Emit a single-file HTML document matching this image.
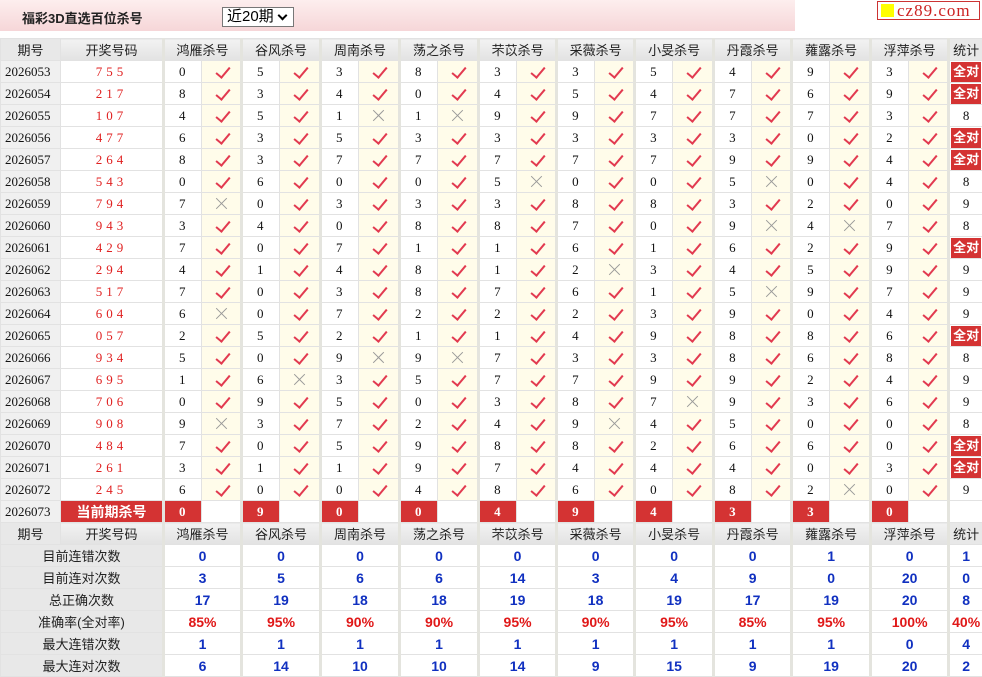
<!DOCTYPE html><html><head><meta charset="utf-8"><style>
body{margin:0;width:982px;height:677px;overflow:hidden;background:#fff;font-family:"Liberation Serif","Noto Serif CJK SC",serif;}
.top{position:absolute;left:0;top:0;width:795px;height:31px;background:linear-gradient(#fdeeee,#f6d6d8);}
.tt{position:absolute;left:22px;top:8px;font:bold 13px "Liberation Sans","Noto Sans CJK SC",sans-serif;color:#222}
.sel{position:absolute;left:222px;top:7px;border:1px solid #777;background:#fff;font:15px "Liberation Sans","Noto Sans CJK SC",sans-serif;line-height:18px;padding-left:4px;box-sizing:border-box;width:72px;height:20px}
.sel:after{content:"";position:absolute;right:7px;top:4px;width:5px;height:5px;border-right:2px solid #000;border-bottom:2px solid #000;transform:rotate(45deg)}
.logo{position:absolute;left:877px;top:1px;width:103px;height:19px;border:1px solid #c33;background:#fff;box-sizing:border-box;color:#c22;font:17px "Liberation Serif",serif;line-height:17px;letter-spacing:1px}
.logo i{display:inline-block;width:13px;height:13px;background:#ff0;margin:2px 3px 0 3px;vertical-align:top}
table{position:absolute;left:0;top:38px;border-collapse:collapse;table-layout:fixed;width:982px}
td{height:21px;padding:0;border:1px solid #e2e2e2;font-size:13px;text-align:center;color:#111;white-space:nowrap;overflow:hidden}
tr.h td{background:linear-gradient(#f2f2f2,#e2e2e2);font:13px "Liberation Sans","Noto Sans CJK SC",sans-serif;color:#222}
td.p{background:#f0f0f0;text-align:left;padding-left:4px}
td.n{color:#e02020;letter-spacing:4px}
td.g{border-left:3px solid #e4e4de;text-align:left;padding-left:14px}
td.k,td.x{background:#fffcea;position:relative}
td.k:after{content:"";position:absolute;left:17px;top:3px;width:6px;height:12px;border-right:2px solid #e23a50;border-bottom:2px solid #e23a50;transform:rotate(40deg)}
td.x:before,td.x:after{content:"";position:absolute;left:12px;top:10px;width:15px;height:1px;background:#999;transform:rotate(45deg)}
td.x:after{transform:rotate(-45deg)}
td.s{border-left:3px solid #e4e4de;background:#fff}
b.q{display:block;margin:0 1px;background:#d43333;color:#fff;font:bold 13px "Liberation Sans","Noto Sans CJK SC",sans-serif;line-height:20px}
td.r{background:#d43333;color:#fff;font-weight:bold}
td.rn{background:#d43333;color:#fff;font:bold 14px "Liberation Sans","Noto Sans CJK SC",sans-serif;letter-spacing:0}
tr.st td{font:bold 14px "Liberation Sans",sans-serif;color:#1030c0}
tr.st td.l{background:#e8e8e8;color:#222;font:13px "Liberation Sans","Noto Sans CJK SC",sans-serif}
tr.st td.v{border-left:3px solid #e4e4de}
tr.pc td{color:#e01818}
</style></head><body>
<div class="top"><div class="tt">福彩3D直选百位杀号</div><div class="sel">近20期</div></div>
<div class="logo"><i></i>cz89.com</div>
<table>
<colgroup><col style="width:60px"><col style="width:103px"><col style="width:38px"><col style="width:40px"><col style="width:38px"><col style="width:41px"><col style="width:38px"><col style="width:41px"><col style="width:38px"><col style="width:41px"><col style="width:38px"><col style="width:40px"><col style="width:38px"><col style="width:40px"><col style="width:38px"><col style="width:41px"><col style="width:38px"><col style="width:40px"><col style="width:38px"><col style="width:41px"><col style="width:38px"><col style="width:40px"><col style="width:34px"></colgroup>
<tr class="h"><td style="background:#e8e8e8">期号</td><td>开奖号码</td><td colspan="2" class="g" style="text-align:center;padding:0">鸿雁杀号</td><td colspan="2" class="g" style="text-align:center;padding:0">谷风杀号</td><td colspan="2" class="g" style="text-align:center;padding:0">周南杀号</td><td colspan="2" class="g" style="text-align:center;padding:0">荡之杀号</td><td colspan="2" class="g" style="text-align:center;padding:0">芣苡杀号</td><td colspan="2" class="g" style="text-align:center;padding:0">采薇杀号</td><td colspan="2" class="g" style="text-align:center;padding:0">小旻杀号</td><td colspan="2" class="g" style="text-align:center;padding:0">丹霞杀号</td><td colspan="2" class="g" style="text-align:center;padding:0">蕹露杀号</td><td colspan="2" class="g" style="text-align:center;padding:0">浮萍杀号</td><td class="s" style="background:#e8e8e8">统计</td></tr>
<tr><td class="p">2026053</td><td class="n">755</td><td class="g">0</td><td class="k"></td><td class="g">5</td><td class="k"></td><td class="g">3</td><td class="k"></td><td class="g">8</td><td class="k"></td><td class="g">3</td><td class="k"></td><td class="g">3</td><td class="k"></td><td class="g">5</td><td class="k"></td><td class="g">4</td><td class="k"></td><td class="g">9</td><td class="k"></td><td class="g">3</td><td class="k"></td><td class="s"><b class="q">全对</b></td></tr>
<tr><td class="p">2026054</td><td class="n">217</td><td class="g">8</td><td class="k"></td><td class="g">3</td><td class="k"></td><td class="g">4</td><td class="k"></td><td class="g">0</td><td class="k"></td><td class="g">4</td><td class="k"></td><td class="g">5</td><td class="k"></td><td class="g">4</td><td class="k"></td><td class="g">7</td><td class="k"></td><td class="g">6</td><td class="k"></td><td class="g">9</td><td class="k"></td><td class="s"><b class="q">全对</b></td></tr>
<tr><td class="p">2026055</td><td class="n">107</td><td class="g">4</td><td class="k"></td><td class="g">5</td><td class="k"></td><td class="g">1</td><td class="x"></td><td class="g">1</td><td class="x"></td><td class="g">9</td><td class="k"></td><td class="g">9</td><td class="k"></td><td class="g">7</td><td class="k"></td><td class="g">7</td><td class="k"></td><td class="g">7</td><td class="k"></td><td class="g">3</td><td class="k"></td><td class="s">8</td></tr>
<tr><td class="p">2026056</td><td class="n">477</td><td class="g">6</td><td class="k"></td><td class="g">3</td><td class="k"></td><td class="g">5</td><td class="k"></td><td class="g">3</td><td class="k"></td><td class="g">3</td><td class="k"></td><td class="g">3</td><td class="k"></td><td class="g">3</td><td class="k"></td><td class="g">3</td><td class="k"></td><td class="g">0</td><td class="k"></td><td class="g">2</td><td class="k"></td><td class="s"><b class="q">全对</b></td></tr>
<tr><td class="p">2026057</td><td class="n">264</td><td class="g">8</td><td class="k"></td><td class="g">3</td><td class="k"></td><td class="g">7</td><td class="k"></td><td class="g">7</td><td class="k"></td><td class="g">7</td><td class="k"></td><td class="g">7</td><td class="k"></td><td class="g">7</td><td class="k"></td><td class="g">9</td><td class="k"></td><td class="g">9</td><td class="k"></td><td class="g">4</td><td class="k"></td><td class="s"><b class="q">全对</b></td></tr>
<tr><td class="p">2026058</td><td class="n">543</td><td class="g">0</td><td class="k"></td><td class="g">6</td><td class="k"></td><td class="g">0</td><td class="k"></td><td class="g">0</td><td class="k"></td><td class="g">5</td><td class="x"></td><td class="g">0</td><td class="k"></td><td class="g">0</td><td class="k"></td><td class="g">5</td><td class="x"></td><td class="g">0</td><td class="k"></td><td class="g">4</td><td class="k"></td><td class="s">8</td></tr>
<tr><td class="p">2026059</td><td class="n">794</td><td class="g">7</td><td class="x"></td><td class="g">0</td><td class="k"></td><td class="g">3</td><td class="k"></td><td class="g">3</td><td class="k"></td><td class="g">3</td><td class="k"></td><td class="g">8</td><td class="k"></td><td class="g">8</td><td class="k"></td><td class="g">3</td><td class="k"></td><td class="g">2</td><td class="k"></td><td class="g">0</td><td class="k"></td><td class="s">9</td></tr>
<tr><td class="p">2026060</td><td class="n">943</td><td class="g">3</td><td class="k"></td><td class="g">4</td><td class="k"></td><td class="g">0</td><td class="k"></td><td class="g">8</td><td class="k"></td><td class="g">8</td><td class="k"></td><td class="g">7</td><td class="k"></td><td class="g">0</td><td class="k"></td><td class="g">9</td><td class="x"></td><td class="g">4</td><td class="x"></td><td class="g">7</td><td class="k"></td><td class="s">8</td></tr>
<tr><td class="p">2026061</td><td class="n">429</td><td class="g">7</td><td class="k"></td><td class="g">0</td><td class="k"></td><td class="g">7</td><td class="k"></td><td class="g">1</td><td class="k"></td><td class="g">1</td><td class="k"></td><td class="g">6</td><td class="k"></td><td class="g">1</td><td class="k"></td><td class="g">6</td><td class="k"></td><td class="g">2</td><td class="k"></td><td class="g">9</td><td class="k"></td><td class="s"><b class="q">全对</b></td></tr>
<tr><td class="p">2026062</td><td class="n">294</td><td class="g">4</td><td class="k"></td><td class="g">1</td><td class="k"></td><td class="g">4</td><td class="k"></td><td class="g">8</td><td class="k"></td><td class="g">1</td><td class="k"></td><td class="g">2</td><td class="x"></td><td class="g">3</td><td class="k"></td><td class="g">4</td><td class="k"></td><td class="g">5</td><td class="k"></td><td class="g">9</td><td class="k"></td><td class="s">9</td></tr>
<tr><td class="p">2026063</td><td class="n">517</td><td class="g">7</td><td class="k"></td><td class="g">0</td><td class="k"></td><td class="g">3</td><td class="k"></td><td class="g">8</td><td class="k"></td><td class="g">7</td><td class="k"></td><td class="g">6</td><td class="k"></td><td class="g">1</td><td class="k"></td><td class="g">5</td><td class="x"></td><td class="g">9</td><td class="k"></td><td class="g">7</td><td class="k"></td><td class="s">9</td></tr>
<tr><td class="p">2026064</td><td class="n">604</td><td class="g">6</td><td class="x"></td><td class="g">0</td><td class="k"></td><td class="g">7</td><td class="k"></td><td class="g">2</td><td class="k"></td><td class="g">2</td><td class="k"></td><td class="g">2</td><td class="k"></td><td class="g">3</td><td class="k"></td><td class="g">9</td><td class="k"></td><td class="g">0</td><td class="k"></td><td class="g">4</td><td class="k"></td><td class="s">9</td></tr>
<tr><td class="p">2026065</td><td class="n">057</td><td class="g">2</td><td class="k"></td><td class="g">5</td><td class="k"></td><td class="g">2</td><td class="k"></td><td class="g">1</td><td class="k"></td><td class="g">1</td><td class="k"></td><td class="g">4</td><td class="k"></td><td class="g">9</td><td class="k"></td><td class="g">8</td><td class="k"></td><td class="g">8</td><td class="k"></td><td class="g">6</td><td class="k"></td><td class="s"><b class="q">全对</b></td></tr>
<tr><td class="p">2026066</td><td class="n">934</td><td class="g">5</td><td class="k"></td><td class="g">0</td><td class="k"></td><td class="g">9</td><td class="x"></td><td class="g">9</td><td class="x"></td><td class="g">7</td><td class="k"></td><td class="g">3</td><td class="k"></td><td class="g">3</td><td class="k"></td><td class="g">8</td><td class="k"></td><td class="g">6</td><td class="k"></td><td class="g">8</td><td class="k"></td><td class="s">8</td></tr>
<tr><td class="p">2026067</td><td class="n">695</td><td class="g">1</td><td class="k"></td><td class="g">6</td><td class="x"></td><td class="g">3</td><td class="k"></td><td class="g">5</td><td class="k"></td><td class="g">7</td><td class="k"></td><td class="g">7</td><td class="k"></td><td class="g">9</td><td class="k"></td><td class="g">9</td><td class="k"></td><td class="g">2</td><td class="k"></td><td class="g">4</td><td class="k"></td><td class="s">9</td></tr>
<tr><td class="p">2026068</td><td class="n">706</td><td class="g">0</td><td class="k"></td><td class="g">9</td><td class="k"></td><td class="g">5</td><td class="k"></td><td class="g">0</td><td class="k"></td><td class="g">3</td><td class="k"></td><td class="g">8</td><td class="k"></td><td class="g">7</td><td class="x"></td><td class="g">9</td><td class="k"></td><td class="g">3</td><td class="k"></td><td class="g">6</td><td class="k"></td><td class="s">9</td></tr>
<tr><td class="p">2026069</td><td class="n">908</td><td class="g">9</td><td class="x"></td><td class="g">3</td><td class="k"></td><td class="g">7</td><td class="k"></td><td class="g">2</td><td class="k"></td><td class="g">4</td><td class="k"></td><td class="g">9</td><td class="x"></td><td class="g">4</td><td class="k"></td><td class="g">5</td><td class="k"></td><td class="g">0</td><td class="k"></td><td class="g">0</td><td class="k"></td><td class="s">8</td></tr>
<tr><td class="p">2026070</td><td class="n">484</td><td class="g">7</td><td class="k"></td><td class="g">0</td><td class="k"></td><td class="g">5</td><td class="k"></td><td class="g">9</td><td class="k"></td><td class="g">8</td><td class="k"></td><td class="g">8</td><td class="k"></td><td class="g">2</td><td class="k"></td><td class="g">6</td><td class="k"></td><td class="g">6</td><td class="k"></td><td class="g">0</td><td class="k"></td><td class="s"><b class="q">全对</b></td></tr>
<tr><td class="p">2026071</td><td class="n">261</td><td class="g">3</td><td class="k"></td><td class="g">1</td><td class="k"></td><td class="g">1</td><td class="k"></td><td class="g">9</td><td class="k"></td><td class="g">7</td><td class="k"></td><td class="g">4</td><td class="k"></td><td class="g">4</td><td class="k"></td><td class="g">4</td><td class="k"></td><td class="g">0</td><td class="k"></td><td class="g">3</td><td class="k"></td><td class="s"><b class="q">全对</b></td></tr>
<tr><td class="p">2026072</td><td class="n">245</td><td class="g">6</td><td class="k"></td><td class="g">0</td><td class="k"></td><td class="g">0</td><td class="k"></td><td class="g">4</td><td class="k"></td><td class="g">8</td><td class="k"></td><td class="g">6</td><td class="k"></td><td class="g">0</td><td class="k"></td><td class="g">8</td><td class="k"></td><td class="g">2</td><td class="x"></td><td class="g">0</td><td class="k"></td><td class="s">9</td></tr>
<tr><td class="p">2026073</td><td class="rn">当前期杀号</td><td class="g r">0</td><td></td><td class="g r">9</td><td></td><td class="g r">0</td><td></td><td class="g r">0</td><td></td><td class="g r">4</td><td></td><td class="g r">9</td><td></td><td class="g r">4</td><td></td><td class="g r">3</td><td></td><td class="g r">3</td><td></td><td class="g r">0</td><td></td><td class="s"></td></tr>
<tr class="h"><td style="background:#e8e8e8">期号</td><td>开奖号码</td><td colspan="2" class="g" style="text-align:center;padding:0">鸿雁杀号</td><td colspan="2" class="g" style="text-align:center;padding:0">谷风杀号</td><td colspan="2" class="g" style="text-align:center;padding:0">周南杀号</td><td colspan="2" class="g" style="text-align:center;padding:0">荡之杀号</td><td colspan="2" class="g" style="text-align:center;padding:0">芣苡杀号</td><td colspan="2" class="g" style="text-align:center;padding:0">采薇杀号</td><td colspan="2" class="g" style="text-align:center;padding:0">小旻杀号</td><td colspan="2" class="g" style="text-align:center;padding:0">丹霞杀号</td><td colspan="2" class="g" style="text-align:center;padding:0">蕹露杀号</td><td colspan="2" class="g" style="text-align:center;padding:0">浮萍杀号</td><td class="s" style="background:#e8e8e8">统计</td></tr>
<tr class="st"><td colspan="2" class="l">目前连错次数</td><td colspan="2" class="v">0</td><td colspan="2" class="v">0</td><td colspan="2" class="v">0</td><td colspan="2" class="v">0</td><td colspan="2" class="v">0</td><td colspan="2" class="v">0</td><td colspan="2" class="v">0</td><td colspan="2" class="v">0</td><td colspan="2" class="v">1</td><td colspan="2" class="v">0</td><td class="v">1</td></tr>
<tr class="st"><td colspan="2" class="l">目前连对次数</td><td colspan="2" class="v">3</td><td colspan="2" class="v">5</td><td colspan="2" class="v">6</td><td colspan="2" class="v">6</td><td colspan="2" class="v">14</td><td colspan="2" class="v">3</td><td colspan="2" class="v">4</td><td colspan="2" class="v">9</td><td colspan="2" class="v">0</td><td colspan="2" class="v">20</td><td class="v">0</td></tr>
<tr class="st"><td colspan="2" class="l">总正确次数</td><td colspan="2" class="v">17</td><td colspan="2" class="v">19</td><td colspan="2" class="v">18</td><td colspan="2" class="v">18</td><td colspan="2" class="v">19</td><td colspan="2" class="v">18</td><td colspan="2" class="v">19</td><td colspan="2" class="v">17</td><td colspan="2" class="v">19</td><td colspan="2" class="v">20</td><td class="v">8</td></tr>
<tr class="st pc"><td colspan="2" class="l">准确率(全对率)</td><td colspan="2" class="v">85%</td><td colspan="2" class="v">95%</td><td colspan="2" class="v">90%</td><td colspan="2" class="v">90%</td><td colspan="2" class="v">95%</td><td colspan="2" class="v">90%</td><td colspan="2" class="v">95%</td><td colspan="2" class="v">85%</td><td colspan="2" class="v">95%</td><td colspan="2" class="v">100%</td><td class="v">40%</td></tr>
<tr class="st"><td colspan="2" class="l">最大连错次数</td><td colspan="2" class="v">1</td><td colspan="2" class="v">1</td><td colspan="2" class="v">1</td><td colspan="2" class="v">1</td><td colspan="2" class="v">1</td><td colspan="2" class="v">1</td><td colspan="2" class="v">1</td><td colspan="2" class="v">1</td><td colspan="2" class="v">1</td><td colspan="2" class="v">0</td><td class="v">4</td></tr>
<tr class="st"><td colspan="2" class="l">最大连对次数</td><td colspan="2" class="v">6</td><td colspan="2" class="v">14</td><td colspan="2" class="v">10</td><td colspan="2" class="v">10</td><td colspan="2" class="v">14</td><td colspan="2" class="v">9</td><td colspan="2" class="v">15</td><td colspan="2" class="v">9</td><td colspan="2" class="v">19</td><td colspan="2" class="v">20</td><td class="v">2</td></tr>
</table>
</body></html>
